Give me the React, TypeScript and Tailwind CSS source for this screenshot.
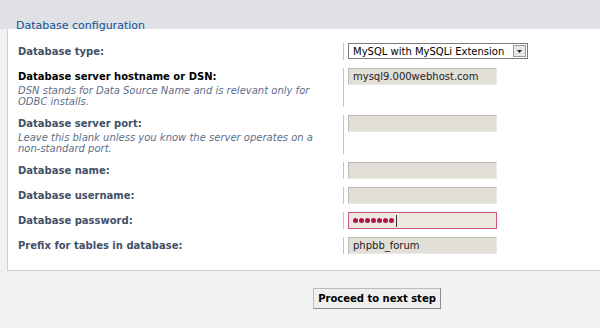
import React from "react";

const font = "font-['DejaVu_Sans',Verdana,sans-serif]";

type Row = {
  label: string;
  explain?: string[];
  dark?: boolean;
  field: React.ReactNode;
};

const Field = ({ value, focus }: { value?: string; focus?: boolean }) => {
  if (focus) {
    return (
      <div className="flex h-[17px] w-[149px] items-center gap-[1px] border border-[#d0587f] bg-[#ece9e3] pl-[4px]">
        {[0, 1, 2, 3, 4, 5, 6].map((i) => (
          <span key={i} className="h-[5px] w-[5px] rounded-full bg-[#b3124f]" />
        ))}
        <span className="ml-[1px] h-[12px] w-px bg-[#333]" />
      </div>
    );
  }
  return (
    <div className="flex h-[17px] w-[149px] items-center border border-t-[#bdb9b0] border-l-[#bdb9b0] border-r-[#ebe9e4] border-b-[#ebe9e4] bg-[#e2dfd9] pl-[4px] text-[10px] text-[#222]">
      {value}
    </div>
  );
};

const SelectBox = () => (
  <div className="flex h-[16px] w-[180px] items-center border border-[#7a7a7a] bg-white pl-[4px] text-[10px] text-black">
    <span className="flex-1">MySQL with MySQLi Extension</span>
    <span className="mr-[1px] flex h-[12px] w-[13px] items-center justify-center border border-[#9a9a9a] bg-[#e6e6e6]">
      <svg width="5" height="3" viewBox="0 0 5 3">
        <path d="M0 0h5L2.5 3z" fill="#222" />
      </svg>
    </span>
  </div>
);

const rows: Row[] = [
  { label: "Database type:", field: <SelectBox /> },
  {
    label: "Database server hostname or DSN:",
    dark: true,
    explain: [
      "DSN stands for Data Source Name and is relevant only for",
      "ODBC installs.",
    ],
    field: <Field value="mysql9.000webhost.com" />,
  },
  {
    label: "Database server port:",
    explain: [
      "Leave this blank unless you know the server operates on a",
      "non-standard port.",
    ],
    field: <Field />,
  },
  { label: "Database name:", field: <Field /> },
  { label: "Database username:", field: <Field /> },
  { label: "Database password:", field: <Field focus /> },
  { label: "Prefix for tables in database:", field: <Field value="phpbb_forum" /> },
];

export default function App() {
  return (
    <div className={`h-[328px] w-[600px] overflow-hidden bg-[#f2f2f2] ${font}`}>
      <div className="h-[29px] bg-[#dfe1e4] pl-[16px] pt-[19px]">
        <div className="text-[11px] leading-[13px] text-[#115098]">
          Database configuration
        </div>
      </div>
      <div className="ml-[7px] w-[620px] border-b border-l border-[#cfcfcf] bg-white pb-[16px] pl-[10px] pt-[14px]">
        <div className="flex flex-col gap-[8px]">
          {rows.map((r) => (
            <div key={r.label} className="flex">
              <div className="w-[325px]">
                <div
                  className={`text-[10px] font-bold leading-[17px] ${
                    r.dark ? "text-black" : "text-[#425067]"
                  }`}
                >
                  {r.label}
                </div>
                {r.explain?.map((e) => (
                  <div key={e} className="text-[10px] italic leading-[11px] text-[#5d6e8a]">
                    {e}
                  </div>
                ))}
              </div>
              <div className="border-l border-[#c4c4c4] pl-[4px]">{r.field}</div>
            </div>
          ))}
        </div>
      </div>
      <div className="flex justify-center pt-[17px]">
        <button className="ml-[154px] h-[21px] border border-t-[#bcbcbc] border-l-[#bcbcbc] border-r-[#8a8a8a] border-b-[#8a8a8a] bg-[#efefef] px-[4px] text-[10px] font-bold text-black">
          Proceed to next step
        </button>
      </div>
    </div>
  );
}
